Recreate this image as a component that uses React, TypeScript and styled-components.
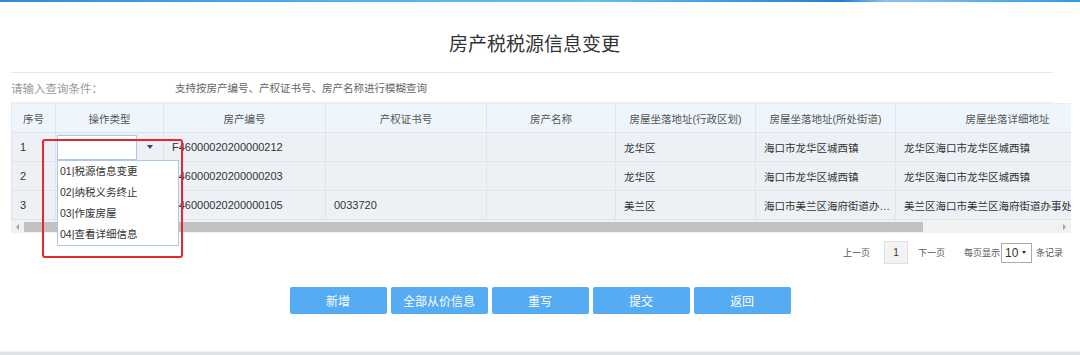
import * as React from "react"
import styled, { createGlobalStyle } from "styled-components"

const GlobalStyle = createGlobalStyle`
  html, body {
    margin: 0;
    padding: 0;
    background: #fff;
  }
  body {
    font-family: "Liberation Sans", "Noto Sans CJK SC", sans-serif;
    color: #333;
  }
`

const Page = styled.div`
  width: 1080px;
  height: 355px;
  display: flex;
  flex-direction: column;
  overflow: hidden;
`

const TopBar = styled.div`
  height: 2px;
  background: linear-gradient(
    90deg,
    #2a8de0 0%,
    #4cb1ee 30%,
    #5cc2f3 55%,
    #1f7fd6 78%,
    #8fc3ea 82%,
    #2d9be8 100%
  );
`

const Title = styled.h1`
  margin: 0 27px 0 11px;
  padding: 31px 0 15px 5px;
  font-size: 19px;
  line-height: 24px;
  font-weight: normal;
  text-align: center;
  color: #333;
  border-bottom: 1px solid #e6e6e6;
`

const QueryBar = styled.div`
  margin: 0 27px 0 11px;
  height: 29px;
  display: flex;
  align-items: center;
  border-bottom: 1px solid #f0f0f0;
`

const QueryLabel = styled.span`
  width: 164px;
  font-size: 11.5px;
  color: #9a9a9a;
`

const QueryHint = styled.span`
  font-size: 10.5px;
  color: #666;
`

const TableWrap = styled.div`
  margin-left: 11px;
  width: 1060px;
  position: relative;
  overflow-x: clip;
  overflow-y: visible;
`

const Table = styled.table`
  border-collapse: collapse;
  table-layout: fixed;
  width: 1108px;
  font-size: 10.5px;
`

const Th = styled.th`
  height: 29px;
  box-sizing: border-box;
  padding: 0 6px;
  background: #eef5fc;
  color: #555;
  font-weight: normal;
  text-align: center;
  white-space: nowrap;
  overflow: hidden;
  border: 1px solid #dfe6ee;
  border-top-color: #e9eef3;
`

const Td = styled.td<{ $select?: boolean; $code?: boolean }>`
  height: 29px;
  box-sizing: border-box;
  padding: ${(p) => (p.$select ? "0" : "0 3px 0 8px")};
  background: #edf1f6;
  color: #333;
  font-size: ${(p) => (p.$code ? "11px" : "10.5px")};
  white-space: nowrap;
  overflow: ${(p) => (p.$select ? "visible" : "hidden")};
  text-overflow: ellipsis;
  border: 1px solid #e0e5ec;
`

const SelectWrap = styled.div`
  position: relative;
  display: flex;
  align-items: center;
  height: 25px;
  margin-left: 1px;
`

const SelectInput = styled.div`
  width: 81px;
  height: 25px;
  box-sizing: border-box;
  border: 1px solid #a9c8ec;
  background: #fff;
`

const ArrowBtn = styled.div`
  width: 26px;
  height: 25px;
  display: flex;
  align-items: center;
  justify-content: center;

  &::after {
    content: "";
    border-left: 3.5px solid transparent;
    border-right: 3.5px solid transparent;
    border-top: 4px solid #2b4a7c;
  }
`

const DropList = styled.ul`
  position: absolute;
  top: 25px;
  left: 0;
  z-index: 5;
  width: 122px;
  box-sizing: border-box;
  margin: 0;
  padding: 0;
  list-style: none;
  background: #fff;
  border: 1px solid #a9c8ec;
`

const DropItem = styled.li`
  height: 21px;
  line-height: 21px;
  padding-left: 2px;
  font-size: 10.5px;
  color: #333;
`

const Marker = styled.div`
  position: absolute;
  left: -15px;
  top: 4px;
  z-index: 6;
  width: 141px;
  height: 119px;
  box-sizing: border-box;
  border: 2px solid #e8262b;
  border-radius: 3px;
  pointer-events: none;
`

const ScrollTrack = styled.div`
  margin-left: 11px;
  width: 1060px;
  height: 13px;
  background: #f1f1f1;
  display: flex;
  align-items: center;
`

const ScrollArrow = styled.div<{ $dir: "left" | "right" }>`
  width: 13px;
  height: 13px;
  display: flex;
  align-items: center;
  justify-content: center;

  &::after {
    content: "";
    border-top: 3px solid transparent;
    border-bottom: 3px solid transparent;
    ${(p) =>
      p.$dir === "left"
        ? "border-right: 3px solid #a3a3a3;"
        : "border-left: 3px solid #a3a3a3;"}
  }
`

const ScrollThumb = styled.div`
  width: 899px;
  height: 10px;
  background: #c1c1c1;
`

const ScrollSpace = styled.div`
  flex: 1;
`

const Pager = styled.div`
  margin-top: 8px;
  height: 23px;
  padding-right: 17px;
  display: flex;
  align-items: center;
  justify-content: flex-end;
  font-size: 9px;
  color: #555;
`

const PageLink = styled.span``

const PageNum = styled.span`
  width: 24px;
  height: 23px;
  margin: 0 10px 0 14px;
  box-sizing: border-box;
  display: flex;
  align-items: center;
  justify-content: center;
  border: 1px solid #e2e2e2;
  background: #f3f3f3;
  font-size: 10px;
  color: #333;
`

const SizeLabel = styled.span`
  margin-left: 19px;
`

const SizeSelect = styled.span`
  width: 31px;
  height: 20px;
  margin: 0 4px 0 1px;
  box-sizing: border-box;
  display: flex;
  align-items: center;
  gap: 4px;
  padding-left: 3px;
  border: 1px solid #aaa;
  font-size: 12px;
  color: #333;

  &::after {
    content: "";
    border-left: 2.5px solid transparent;
    border-right: 2.5px solid transparent;
    border-top: 3.5px solid #333;
  }
`

const Actions = styled.div`
  margin-top: 23px;
  display: flex;
  justify-content: center;
  gap: 4px;
`

const ActionButton = styled.button`
  width: 97px;
  height: 27px;
  border: none;
  border-radius: 2px;
  background: #55acf3;
  color: #fff;
  font-family: "Liberation Sans", "Noto Sans CJK SC", sans-serif;
  font-size: 12px;
  padding: 0;
`

const Footer = styled.div`
  margin-top: auto;
  height: 3px;
  border-top: 1px solid #eef0f3;
  background: #dfe3e8;
`

const columns = [
  { title: "序号", width: 44 },
  { title: "操作类型", width: 108 },
  { title: "房产编号", width: 162 },
  { title: "产权证书号", width: 161 },
  { title: "房产名称", width: 129 },
  { title: "房屋坐落地址(行政区划)", width: 140 },
  { title: "房屋坐落地址(所处街道)", width: 140 },
  { title: "房屋坐落详细地址", width: 224 },
]

const rows = [
  ["1", "F46000020200000212", "", "", "龙华区", "海口市龙华区城西镇", "龙华区海口市龙华区城西镇"],
  ["2", "F46000020200000203", "", "", "龙华区", "海口市龙华区城西镇", "龙华区海口市龙华区城西镇"],
  ["3", "F46000020200000105", "0033720", "", "美兰区", "海口市美兰区海府街道办事处", "美兰区海口市美兰区海府街道办事处"],
]

const options = ["01|税源信息变更", "02|纳税义务终止", "03|作废房屋", "04|查看详细信息"]

const buttons = ["新增", "全部从价信息", "重写", "提交", "返回"]

const App = () => (
  <Page>
    <GlobalStyle />
    <TopBar />
    <Title>房产税税源信息变更</Title>
    <QueryBar>
      <QueryLabel>请输入查询条件：</QueryLabel>
      <QueryHint>支持按房产编号、产权证书号、房产名称进行模糊查询</QueryHint>
    </QueryBar>
    <TableWrap>
      <Table>
        <colgroup>
          {columns.map((c) => (
            <col key={c.title} style={{ width: c.width }} />
          ))}
        </colgroup>
        <thead>
          <tr>
            {columns.map((c) => (
              <Th key={c.title}>{c.title}</Th>
            ))}
          </tr>
        </thead>
        <tbody>
          {rows.map((r, i) => (
            <tr key={r[0]}>
              <Td $code>{r[0]}</Td>
              <Td $select>
                {i === 0 && (
                  <SelectWrap>
                    <SelectInput />
                    <ArrowBtn />
                    <DropList>
                      {options.map((o) => (
                        <DropItem key={o}>{o}</DropItem>
                      ))}
                    </DropList>
                    <Marker />
                  </SelectWrap>
                )}
              </Td>
              {r.slice(1).map((v, j) => (
                <Td key={j} $code={j < 2}>
                  {v}
                </Td>
              ))}
            </tr>
          ))}
        </tbody>
      </Table>
    </TableWrap>
    <ScrollTrack>
      <ScrollArrow $dir="left" />
      <ScrollThumb />
      <ScrollSpace />
      <ScrollArrow $dir="right" />
    </ScrollTrack>
    <Pager>
      <PageLink>上一页</PageLink>
      <PageNum>1</PageNum>
      <PageLink>下一页</PageLink>
      <SizeLabel>每页显示</SizeLabel>
      <SizeSelect>10</SizeSelect>
      <span>条记录</span>
    </Pager>
    <Actions>
      {buttons.map((b) => (
        <ActionButton key={b}>{b}</ActionButton>
      ))}
    </Actions>
    <Footer />
  </Page>
)

export default App
